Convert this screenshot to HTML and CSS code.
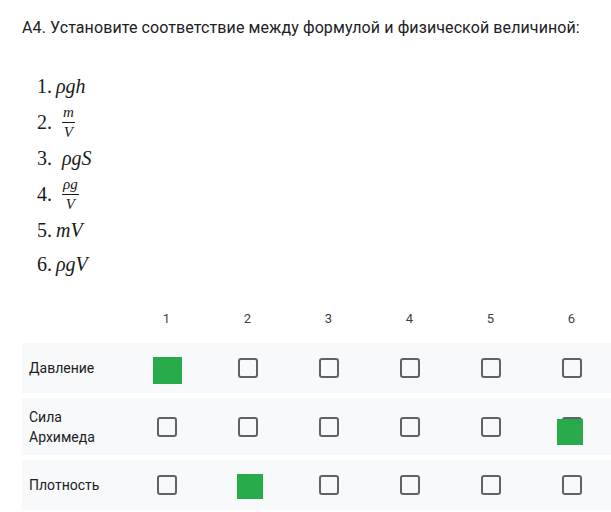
FILE: index.html
```html
<!DOCTYPE html>
<html lang="ru">
<head>
    <meta charset="UTF-8">
    <meta name="viewport" content="width=device-width, initial-scale=1.0">
    <title>A4</title>
    <link rel="stylesheet" href="styles.css">
</head>
<body>
    <div class="question">
        <div class="question-title">А4. Установите соответствие между формулой и физической величиной:</div>

        <!-- formulas -->
        <div class="formulas">
            <div class="formula"><span class="num">1.</span><i>ρgh</i></div>
            <div class="formula frac-row">
                <span class="num">2.</span>
                <span class="frac"><i class="top">m</i><i class="bottom">V</i></span>
            </div>
            <div class="formula"><span class="num">3.</span><i class="spaced">ρgS</i></div>
            <div class="formula frac-row">
                <span class="num">4.</span>
                <span class="frac"><i class="top">ρg</i><i class="bottom">V</i></span>
            </div>
            <div class="formula"><span class="num">5.</span><i>mV</i></div>
            <div class="formula"><span class="num">6.</span><i>ρgV</i></div>
        </div>

        <!-- answer grid -->
        <div class="grid">
            <div class="grid-head">
                <span></span>
                <span>1</span><span>2</span><span>3</span><span>4</span><span>5</span><span>6</span>
            </div>

            <div class="grid-row">
                <span class="row-label">Давление</span>
                <span class="cell"><span class="box"></span><span class="mark mark-a"></span></span>
                <span class="cell"><span class="box"></span></span>
                <span class="cell"><span class="box"></span></span>
                <span class="cell"><span class="box"></span></span>
                <span class="cell"><span class="box"></span></span>
                <span class="cell"><span class="box"></span></span>
            </div>

            <div class="grid-row tall">
                <span class="row-label">Сила<br>Архимеда</span>
                <span class="cell"><span class="box"></span></span>
                <span class="cell"><span class="box"></span></span>
                <span class="cell"><span class="box"></span></span>
                <span class="cell"><span class="box"></span></span>
                <span class="cell"><span class="box"></span></span>
                <span class="cell"><span class="box"></span><span class="mark mark-b"></span></span>
            </div>

            <div class="grid-row">
                <span class="row-label">Плотность</span>
                <span class="cell"><span class="box"></span></span>
                <span class="cell"><span class="box"></span><span class="mark mark-c"></span></span>
                <span class="cell"><span class="box"></span></span>
                <span class="cell"><span class="box"></span></span>
                <span class="cell"><span class="box"></span></span>
                <span class="cell"><span class="box"></span></span>
            </div>
        </div>
    </div>
</body>
</html>
```

FILE: styles.css
```css
*{
    box-sizing: border-box;
}
body{
    margin: 0;
    background: #fff;
    font-family: Roboto, "Liberation Sans", sans-serif;
    color: #202124;
    overflow: hidden;
}
.question{
    padding: 16px 0 0 22px;
}
.question-title{
    font-size: 16px;
    line-height: 24px;
    letter-spacing: 0.1px;
}

/*
* Formulas
*/
.formulas{
    margin-top: 29px;
    padding-left: 15px;
    font-family: "Liberation Serif", serif;
    font-size: 20px;
    color: #1a1a1a;
}
.formula{
    display: flex;
    align-items: center;
    height: 34px;
}
.formula.frac-row{
    height: 38px;
}
.formula .num{
    margin-right: 4px;
}
.formula .spaced{
    margin-left: 6px;
}
.frac{
    display: inline-flex;
    flex-direction: column;
    align-items: center;
    margin-left: 6px;
    font-size: 15px;
    line-height: 15px;
}
.frac .top{
    padding: 0 1px 2px;
    border-bottom: 1px solid #1a1a1a;
}
.frac .bottom{
    padding-top: 2px;
}

/*
* Grid
*/
.grid{
    margin-top: 20px;
}
.grid-head, .grid-row{
    display: grid;
    grid-template-columns: 104px repeat(6, 81px);
}
.grid-head{
    height: 34px;
    margin-bottom: 8px;
    font-size: 13px;
    color: #3c4043;
    align-items: center;
}
.grid-head span{
    text-align: center;
}
.grid-row{
    height: 50px;
    margin-bottom: 5px;
    background: #f8f9fa;
    align-items: center;
}
.grid-row.tall{
    height: 57px;
}
.row-label{
    padding-left: 7px;
    font-size: 14px;
    line-height: 20px;
}
.cell{
    position: relative;
    display: flex;
    justify-content: center;
    align-items: center;
    height: 100%;
}
.box{
    width: 20px;
    height: 20px;
    border: 2px solid #5f6368;
    border-radius: 3px;
}
.mark{
    position: absolute;
    left: 50%;
    top: 50%;
    background: #27ab4b;
}
.mark-a{
    width: 29px;
    height: 27px;
    margin: -11px 0 0 -14px;
}
.mark-b{
    width: 26px;
    height: 26px;
    margin: -8px 0 0 -15px;
}
.mark-c{
    width: 26px;
    height: 25px;
    margin: -11px 0 0 -11px;
}
```
